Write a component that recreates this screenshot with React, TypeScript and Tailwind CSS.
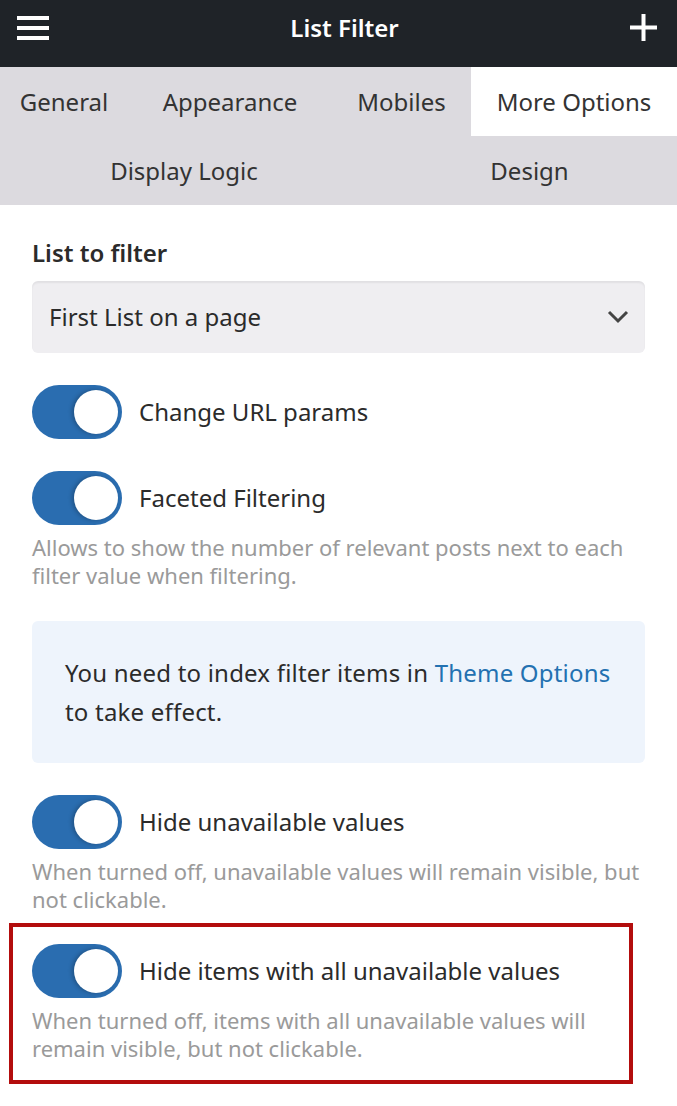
import React from "react";

function Toggle() {
  return (
    <div className="relative h-[54px] w-[90px] shrink-0 rounded-full bg-[#2a6db0]">
      <div className="absolute right-[4px] top-[5px] h-[44px] w-[44px] rounded-full bg-white shadow-[-2px_0_4px_rgba(0,0,0,0.25)]" />
    </div>
  );
}

function ToggleRow({ label }: { label: string }) {
  return (
    <div className="flex items-center gap-[17px]">
      <Toggle />
      <span className="text-[24px] text-[#2b2b2b]">{label}</span>
    </div>
  );
}

function Desc({ children }: { children: React.ReactNode }) {
  return (
    <p className="mt-[8px] text-[22px] leading-[28px] text-[#9a9a9a]">{children}</p>
  );
}

export default function App() {
  return (
    <div
      className="w-[677px] min-h-[1106px] bg-white"
      style={{ fontFamily: '"Noto Sans", "Open Sans", sans-serif' }}
    >
      {/* Header */}
      <div className="flex h-[67px] items-center justify-between bg-[#1f2328] pb-[12px] pl-[17px] pr-[20px]">
        <div className="flex w-[32px] flex-col gap-[6px]">
          <div className="h-[4px] bg-white" />
          <div className="h-[4px] bg-white" />
          <div className="h-[4px] bg-white" />
        </div>
        <div className="pl-[10px] text-[24px] font-semibold text-white">List Filter</div>
        <svg width="27" height="27" viewBox="0 0 27 27">
          <rect x="11.5" y="0" width="4" height="27" fill="white" />
          <rect x="0" y="11.5" width="27" height="4" fill="white" />
        </svg>
      </div>

      {/* Tabs */}
      <div className="bg-[#dcdadf] text-[24px] text-[#333]">
        <div className="flex h-[69px]">
          <div className="flex w-[128px] items-center justify-center">General</div>
          <div className="flex w-[204px] items-center justify-center">Appearance</div>
          <div className="flex w-[139px] items-center justify-center">Mobiles</div>
          <div className="flex flex-1 items-center justify-center bg-white">More Options</div>
        </div>
        <div className="flex h-[69px]">
          <div className="flex w-[368px] items-center justify-center">Display Logic</div>
          <div className="flex flex-1 items-center justify-center pl-[14px]">Design</div>
        </div>
      </div>

      {/* Content */}
      <div className="px-[32px] pt-[32px]">
        <div className="text-[24px] font-semibold leading-[32px] text-[#2b2b2b]">List to filter</div>
        <div className="mt-[12px] flex h-[72px] items-center justify-between rounded-[6px] bg-[#efeef1] pl-[17px] pr-[16px] shadow-[inset_0_2px_2px_rgba(0,0,0,0.06)]">
          <span className="text-[24px] text-[#2b2b2b]">First List on a page</span>
          <svg width="22" height="14" viewBox="0 0 22 14">
            <path d="M2 2 L11 11 L20 2" stroke="#444" strokeWidth="3" fill="none" />
          </svg>
        </div>

        <div className="mt-[32px]">
          <ToggleRow label="Change URL params" />
        </div>
        <div className="mt-[32px]">
          <ToggleRow label="Faceted Filtering" />
          <Desc>Allows to show the number of relevant posts next to each filter value when filtering.</Desc>
        </div>

        <div className="mt-[32px] rounded-[6px] bg-[#eef4fc] px-[33px] py-[32px] text-[24px] leading-[39px] tracking-[0.2px] text-[#2b2b2b]">
          You need to index filter items in <span className="text-[#2371b1]">Theme Options</span> to take effect.
        </div>

        <div className="mt-[32px]">
          <ToggleRow label="Hide unavailable values" />
          <Desc>When turned off, unavailable values will remain visible, but not clickable.</Desc>
        </div>
      </div>

      <div className="ml-[9px] mt-[10px] w-[624px] border-[4px] border-[#b30d0d] pb-[18px] pl-[19px] pr-[20px] pt-[17px]">
        <ToggleRow label="Hide items with all unavailable values" />
        <Desc>When turned off, items with all unavailable values will remain visible, but not clickable.</Desc>
      </div>
    </div>
  );
}
